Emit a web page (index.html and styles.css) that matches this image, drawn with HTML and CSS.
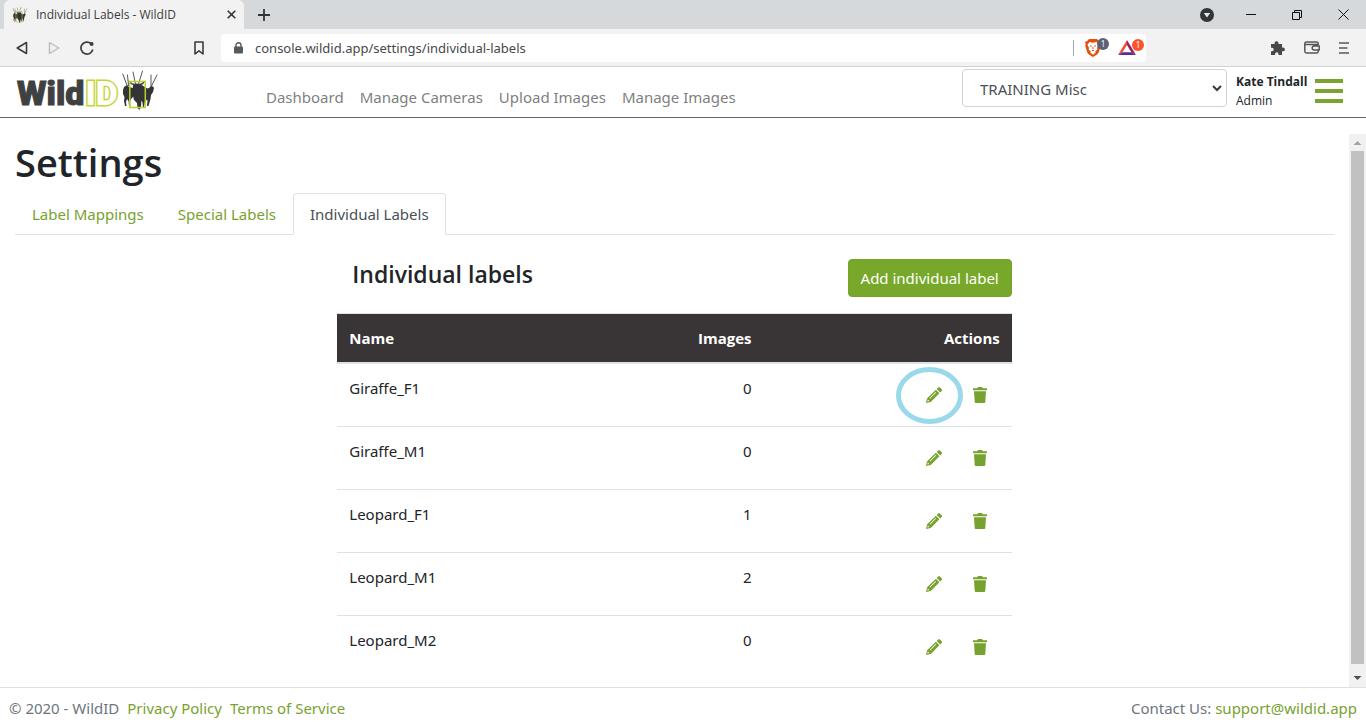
FILE: index.html
```html
<!DOCTYPE html>
<html lang="en">
<head>
<meta charset="utf-8">
<title>Individual Labels - WildID</title>
<link rel="stylesheet" href="styles.css">
</head>
<body>
<svg class="sprite" aria-hidden="true">
  <symbol id="herd" viewBox="0 0 36 40">
    <g fill="#333435">
      <path d="M2 17l3-2 2 2 4 1v9l-2 2-1 3 .5 4H7l-.5-5-1.500-2-1 3 .5 4H3l-1-5 .5-4L1 24v-4z"/>
      <path d="M11 15l3-1.500 4 .5 5 3 3 2 .5 7-1.500 4-2 1-1 6-1 .5-.5-5-1-2-.5 6-1.500 3.500-2-2-.5-5-3-3-1.500-6z"/>
      <path d="M24 19l3-1 2-2 2 .5 1 1.500-1 4-2 3-.5 4-2 7h-1.500l.5-6-2-3z"/>
    </g>
    <g fill="none" stroke="#444546" stroke-linecap="round">
      <path d="M5 15.500L.800 4M6.500 15.500L5.500 5M13.500 14L11 2M16.500 14l4-13M29.500 16l5.500-11M29 16V5" stroke-width=".9"/>
      <path d="M13 14.500q-4 0-5.500-3M17 14.500q4 0 5-3" stroke-width="1.600"/>
    </g>
    <path d="M7.800 11.500h15.500v26H7.800z" fill="none" stroke="#bdd02b" stroke-width="1.500"/>
  </symbol>
  <symbol id="pencil" viewBox="0 0 16 16">
    <path fill-rule="evenodd" d="M12.200.500a1.200 1.200 0 0 1 1.700 0l1.800 1.800a1.200 1.200 0 0 1 0 1.700l-1.500 1.500-3.500-3.500zM9.900 2.800l3.500 3.500-8.600 8.600L0 16l1.100-4.800zM9.500 5l-6 6 .6.6 6-6zM1.800 12.600l-.4 1.900 1.900-.4z"/>
  </symbol>
  <symbol id="trash" viewBox="0 0 14 16">
    <path d="M0 1.200h4.100L5 0h4l.9 1.200H14v2H0zM1 4.200h12l-.7 10.500c0 .8-.6 1.300-1.300 1.300H3c-.7 0-1.300-.5-1.300-1.300z"/>
  </symbol>
</svg>

<div class="tabstrip">
  <div class="browser-tab">
    <svg class="favicon" width="16" height="16"><use href="#herd"/></svg>
    <span class="browser-tab-title">Individual Labels - WildID</span>
    <button class="plain" aria-label="Close tab"><svg width="9" height="9" viewBox="0 0 9 9"><path d="M.7.7l7.600 7.600M8.300.7L.7 8.300" stroke="#333" stroke-width="1.600"/></svg></button>
  </div>
  <button class="plain new-tab" aria-label="New tab"><svg width="12" height="12" viewBox="0 0 12 12"><path d="M6 0v12M0 6h12" stroke="#333" stroke-width="1.800"/></svg></button>
  <div class="window-buttons">
    <button class="plain search-tabs" aria-label="Search tabs"><svg width="14" height="14" viewBox="0 0 14 14"><circle cx="7" cy="7" r="7" fill="#333638"/><path d="M3.800 5h6.400L7 9.600z" fill="#e8eaec"/></svg></button>
    <button class="plain" aria-label="Minimize"><svg width="10" height="10" viewBox="0 0 10 10"><path d="M0 4.500h10" stroke="#111"/></svg></button>
    <button class="plain" aria-label="Restore"><svg width="10" height="10" viewBox="0 0 10 10"><path d="M.5 2.500h7v7h-7zM2.500 2.500v-2h7v7h-2" fill="none" stroke="#111"/></svg></button>
    <button class="plain" aria-label="Close"><svg width="11" height="11" viewBox="0 0 11 11"><path d="M.5.5l10 10M10.500.5l-10 10" stroke="#111"/></svg></button>
  </div>
</div>

<div class="toolbar">
  <div class="nav-buttons">
    <button class="plain" aria-label="Back"><svg width="12" height="14" viewBox="0 0 12 14"><path d="M10.500 1.500v11L1.200 7z" fill="none" stroke="#3b3d40" stroke-width="1.600" stroke-linejoin="round"/></svg></button>
    <button class="plain" aria-label="Forward" disabled><svg width="12" height="14" viewBox="0 0 12 14"><path d="M1.500 1.500v11L10.800 7z" fill="none" stroke="#bbb" stroke-width="1.400" stroke-linejoin="round"/></svg></button>
    <button class="plain" aria-label="Reload"><svg width="14" height="14" viewBox="0 0 14 14"><path d="M12.800 8.500A6 6 0 1 1 11 2.600" fill="none" stroke="#3b3d40" stroke-width="1.700"/><circle cx="11.600" cy="3" r="2" fill="#3b3d40"/></svg></button>
  </div>
  <button class="plain bookmark" aria-label="Bookmark"><svg width="10" height="14" viewBox="0 0 10 14"><path d="M1 1h8v12L5 9.800 1 13z" fill="none" stroke="#3b3d40" stroke-width="1.600" stroke-linejoin="round"/></svg></button>
  <div class="address">
    <svg width="9" height="12" viewBox="0 0 9 12"><path d="M2 5V3.200a2.500 2.500 0 0 1 5 0V5" fill="none" stroke="#55585c" stroke-width="1.400"/><rect y="4.500" width="9" height="7" rx="1" fill="#55585c"/></svg>
    <input class="url" aria-label="Address" value="console.wildid.app/settings/individual-labels">
    <span class="address-divider"></span>
    <button class="plain shield" aria-label="Shields">
      <svg width="16" height="18" viewBox="0 0 16 18"><path d="M4 0h8l1.500 1.700L16 3l-.6 2 .3 2-2 6.500c-.6 1.700-3.700 3.400-5.700 4.500-2-1.100-5.100-2.800-5.700-4.500L.3 7l.3-2L0 3l2.500-1.300z" fill="#e6500f"/><path d="M4.500 3L8 3.700l3.500-.7 2 3-1.500 2.700.3 2-2 1.500.4 1.300L8 15.800l-2.700-2.300.4-1.300-2-1.500.3-2L2.500 6z" fill="#fff"/><path d="M5 6.800l1.700.4M11 6.800l-1.700.4M8 8v2M7 11.500h2" stroke="#e6500f" fill="none"/></svg>
      <span class="badge badge-slate">1</span>
    </button>
    <button class="plain rewards" aria-label="Rewards">
      <svg width="18" height="15" viewBox="0 0 18 15"><path d="M9 0L0 15l4.500-2.700L9 5z" fill="#f0502b"/><path d="M9 0l9 15-4.700-2.700L9 5z" fill="#9c1f63"/><path d="M0 15h18l-4.700-2.800H4.600z" fill="#5b2d90"/></svg>
      <span class="badge badge-orange">1</span>
    </button>
  </div>
  <div class="tool-buttons">
    <button class="plain" aria-label="Extensions"><svg width="15" height="15" viewBox="0 0 15 15"><path d="M1 4h3.700a2 2 0 1 1 3.800-1.200L8.400 4H12v3.500h1a1.900 1.900 0 0 1 0 3.800h-1V15H8.500v-1a1.700 1.700 0 0 0-3.400 0v1H1v-3.800h1a1.700 1.700 0 0 0 0-3.400H1z" fill="#46484b"/></svg></button>
    <button class="plain" aria-label="Wallet"><svg width="16" height="13" viewBox="0 0 16 13"><path d="M14.200 4V2.500Q14.200 1 12.500 1H2.500Q.8 1 .8 2.800v7.500Q.8 12 2.500 12h10q1.700 0 1.700-1.500V9.500M1.500 3.500h12.500M15.200 5v4h-5a2 2 0 0 1 0-4z" fill="none" stroke="#55575a" stroke-width="1.500"/></svg></button>
    <button class="plain" aria-label="Menu"><svg width="10" height="12" viewBox="0 0 10 12"><path d="M0 1h10M0 6h8.500M0 11h10" stroke="#55575a" stroke-width="1.600"/></svg></button>
  </div>
</div>

<header class="site-header">
  <a class="logo" href="#" aria-label="WildID">
    <span class="logo-wild">Wild</span><span class="logo-id">ID</span>
    <svg class="logo-herd" width="36" height="40"><use href="#herd"/></svg>
  </a>
  <nav class="main-nav">
    <a href="#">Dashboard</a>
    <a href="#">Manage Cameras</a>
    <a href="#">Upload Images</a>
    <a href="#">Manage Images</a>
  </nav>
  <div class="project">
    <select class="project-select" aria-label="Project"><option>TRAINING Misc</option></select>
    <svg class="chevron" width="10" height="7" viewBox="0 0 10 7"><path d="M1 1l4 4 4-4" fill="none" stroke="#343a40" stroke-width="2"/></svg>
  </div>
  <div class="user"><strong>Kate Tindall</strong><span>Admin</span></div>
  <button class="plain menu-button" aria-label="Menu"><span></span><span></span><span></span></button>
</header>

<div class="viewport">
  <main class="content">
    <h1>Settings</h1>
    <nav class="tabs">
      <a class="tab" href="#">Label Mappings</a>
      <a class="tab" href="#">Special Labels</a>
      <a class="tab active" href="#">Individual Labels</a>
    </nav>
    <section class="panel">
      <div class="panel-head">
        <h2>Individual labels</h2>
        <button class="add-button">Add individual label</button>
      </div>
      <table class="labels">
        <thead><tr><th class="col-name">Name</th><th class="col-images">Images</th><th class="col-actions">Actions</th></tr></thead>
        <tbody>
          <tr><td>Giraffe_F1</td><td class="num">0</td><td><div class="actions"><button class="icon-button" aria-label="Edit"><svg width="16" height="16"><use href="#pencil"/></svg><svg class="ring" width="67" height="57" viewBox="0 0 67 57"><ellipse cx="33.500" cy="28.500" rx="31" ry="26" fill="none" stroke="#99d9ea" stroke-width="5"/></svg></button><button class="icon-button" aria-label="Delete"><svg width="14" height="16"><use href="#trash"/></svg></button></div></td></tr>
          <tr><td>Giraffe_M1</td><td class="num">0</td><td><div class="actions"><button class="icon-button" aria-label="Edit"><svg width="16" height="16"><use href="#pencil"/></svg></button><button class="icon-button" aria-label="Delete"><svg width="14" height="16"><use href="#trash"/></svg></button></div></td></tr>
          <tr><td>Leopard_F1</td><td class="num">1</td><td><div class="actions"><button class="icon-button" aria-label="Edit"><svg width="16" height="16"><use href="#pencil"/></svg></button><button class="icon-button" aria-label="Delete"><svg width="14" height="16"><use href="#trash"/></svg></button></div></td></tr>
          <tr><td>Leopard_M1</td><td class="num">2</td><td><div class="actions"><button class="icon-button" aria-label="Edit"><svg width="16" height="16"><use href="#pencil"/></svg></button><button class="icon-button" aria-label="Delete"><svg width="14" height="16"><use href="#trash"/></svg></button></div></td></tr>
          <tr><td>Leopard_M2</td><td class="num">0</td><td><div class="actions"><button class="icon-button" aria-label="Edit"><svg width="16" height="16"><use href="#pencil"/></svg></button><button class="icon-button" aria-label="Delete"><svg width="14" height="16"><use href="#trash"/></svg></button></div></td></tr>
        </tbody>
      </table>
    </section>
  </main>
  <div class="scrollbar" aria-hidden="true">
    <svg width="17" height="17" viewBox="0 0 17 17"><path d="M4.500 11h8l-4-4z" fill="#a3a3a3"/></svg>
    <div class="thumb"></div>
    <svg width="17" height="23" viewBox="0 0 17 23"><path d="M4.500 12h8l-4 4z" fill="#505050"/></svg>
  </div>
</div>

<footer class="site-footer">
  <span>© 2020 - WildID</span>
  <a href="#">Privacy Policy</a>
  <a href="#">Terms of Service</a>
  <span class="contact">Contact Us: <a href="#">support@wildid.app</a></span>
</footer>
</body>
</html>
```

FILE: styles.css
```css
* { box-sizing: border-box; }

body {
  margin: 0;
  height: 100vh;
  display: flex;
  flex-direction: column;
  overflow: hidden;
  background: #fff;
  color: #212529;
  font: 15px/24px "Noto Sans", "Open Sans", sans-serif;
}

a { color: #78a22f; text-decoration: none; }
button, input, select { font: inherit; }
svg { display: block; flex: none; }
.sprite { position: absolute; width: 0; height: 0; }

.plain {
  display: flex;
  align-items: center;
  padding: 0;
  border: 0;
  background: none;
}

/* Browser window */
.tabstrip {
  display: flex;
  align-items: center;
  flex: none;
  height: 29px;
  padding-left: 4px;
  background: #d5d9dc;
}
.browser-tab {
  display: flex;
  align-items: center;
  gap: 8px;
  width: 240px;
  height: 29px;
  padding: 0 8px;
  border-radius: 6px 6px 0 0;
  background: #f2f2f2;
  color: #3b3d40;
  font: 12px/24px "Open Sans", sans-serif;
}
.browser-tab-title { flex: 1; }
.new-tab { margin-left: 14px; }
.window-buttons {
  display: flex;
  align-items: center;
  gap: 36px;
  margin-left: auto;
  padding-right: 17px;
}
.search-tabs { margin-right: -4px; }

.toolbar {
  display: flex;
  align-items: center;
  flex: none;
  height: 38px;
  padding: 0 17px 0 16px;
  border-bottom: 1px solid #cfd1d3;
  background: #f2f2f2;
}
.nav-buttons { display: flex; gap: 20px; }
.bookmark { margin-left: 100px; }
.address {
  display: flex;
  align-items: center;
  flex: 1;
  height: 28px;
  margin-left: 17px;
  padding: 0 2px 0 13px;
  border-radius: 4px;
  background: #fff;
}
.url {
  flex: 1;
  margin-left: 12px;
  padding: 0;
  border: 0;
  outline: 0;
  background: none;
  color: #46484b;
  font-size: 13px;
}
.address-divider { width: 1px; height: 16px; background: #a5a7a9; }
.shield, .rewards { position: relative; margin-left: 11px; padding-right: 8px; }
.rewards { margin-left: 9px; }
.badge {
  position: absolute;
  top: -1px;
  right: 0;
  width: 12px;
  height: 12px;
  border-radius: 6px;
  color: #fff;
  font-size: 8px;
  line-height: 12px;
  text-align: center;
}
.badge-slate { background: #5e6175; }
.badge-orange { background: #fb542b; }
.tool-buttons {
  display: flex;
  align-items: center;
  gap: 19px;
  margin-left: 124px;
}

/* Site header */
.site-header {
  display: flex;
  flex: none;
  height: 51px;
  padding: 0 23px 0 17px;
  border-bottom: 1px solid #6a6a6a;
}
.logo {
  display: flex;
  width: 241px;
  padding-top: 3px;
  font: 900 34px/46px Roboto, sans-serif;
}
.logo-wild { color: #3f4042; -webkit-text-stroke: 1px #3f4042; }
.logo-id { margin-left: 1px; color: #fff; -webkit-text-stroke: 3px #c3d62f; paint-order: stroke fill; }
.logo-herd { margin-left: 4px; }
.main-nav { display: flex; padding-top: 18px; }
.main-nav a { padding: 0 8px; color: #7f7f7f; }
.project { position: relative; margin: 2px 9px 0 auto; width: 265px; height: 38px; }
.project-select {
  width: 100%;
  height: 38px;
  padding: 1px 17px 0;
  appearance: none;
  border: 1px solid #ced4da;
  border-radius: 4px;
  background: #fff;
  color: #495057;
}
.chevron { position: absolute; right: 5px; top: 16px; pointer-events: none; }
.user {
  display: flex;
  flex-direction: column;
  width: 71px;
  margin-right: 8px;
  padding-top: 5px;
  font: 12px/19px "Open Sans", sans-serif;
  white-space: nowrap;
}
.menu-button { flex-direction: column; gap: 6px; padding-top: 12px; }
.menu-button span { width: 28px; height: 4px; background: #7aa42e; }

/* Page */
.viewport { display: flex; flex: 1; min-height: 0; padding-top: 16px; }
.content { flex: 1; padding: 4px 15px 0; overflow: hidden; }
h1 { margin: 0 0 7px; font: 600 38px/48px "Open Sans", sans-serif; }
.tabs { display: flex; border-bottom: 1px solid #dee2e6; }
.tab {
  margin-bottom: -1px;
  padding: 8px 16px;
  border: 1px solid transparent;
  border-radius: 4px 4px 0 0;
}
.tab.active { border-color: #dee2e6 #dee2e6 #fff; background: #fff; color: #495057; }
.panel { width: 51.136%; margin: 24px auto 0; }
.panel-head {
  display: flex;
  justify-content: space-between;
  padding-left: 15px;
  margin-bottom: 16px;
}
h2 { margin: 0; font: 600 23px/30px "Open Sans", sans-serif; }
.add-button {
  height: 38px;
  padding: 0 12px;
  border: 1px solid #78a22f;
  border-radius: 4px;
  background: #78a82a;
  color: #fff;
}
.labels { width: 100%; border-collapse: collapse; table-layout: fixed; }
.labels th {
  padding: 12px;
  background: #393435;
  border-top: 1px solid #dee2e6;
  border-bottom: 2px solid #dee2e6;
  color: #fff;
  font-family: "Open Sans", sans-serif;
  text-align: left;
}
.labels .col-name { width: 39%; }
.labels .col-images { width: 24.2%; text-align: right; }
.labels .col-actions { text-align: right; }
.labels td { padding: 12px; border-top: 1px solid #dee2e6; vertical-align: top; }
.labels .num { text-align: right; }
.actions { display: flex; justify-content: flex-end; gap: 6px; }
.icon-button {
  position: relative;
  display: flex;
  align-items: center;
  justify-content: center;
  width: 40px;
  height: 38px;
  padding: 0;
  border: 0;
  background: none;
  fill: #78a22f;
}
.ring { position: absolute; left: -18px; top: -9px; pointer-events: none; }

.scrollbar {
  display: flex;
  flex-direction: column;
  width: 17px;
  background: #f1f1f1;
}
.thumb { flex: 1; margin: 0 2px; background: #c1c1c1; }

/* Footer */
.site-footer {
  display: flex;
  align-items: center;
  gap: 8px;
  flex: none;
  height: 41px;
  padding: 0 9px;
  border-top: 1px solid #dee2e6;
  color: #6c757d;
}
.contact { margin-left: auto; }
```
